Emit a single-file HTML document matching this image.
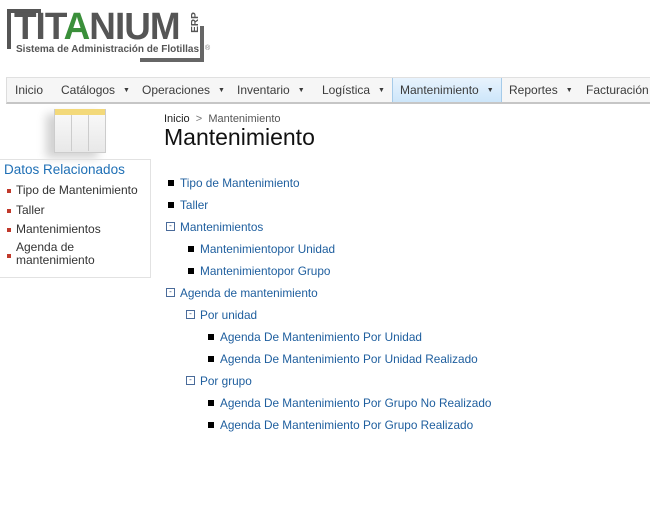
<!DOCTYPE html>
<html><head><meta charset="utf-8"><style>
body{margin:0;width:650px;height:520px;background:#fff;font-family:"Liberation Sans",sans-serif;position:relative;overflow:hidden;color:#333}
.a{position:absolute;white-space:nowrap}
.nav{position:absolute;left:6px;top:77px;width:644px;height:24px;background:#f6f6f6;border-top:1px solid #e0e0e0;border-left:1px solid #ddd;border-bottom:2px solid #c6c6c6}
.ni{position:absolute;top:5px;font-size:12px;color:#3b3b3b}
.tri{font-size:7px;vertical-align:2px;margin-left:8px}
.sel{position:absolute;left:385px;top:0;width:108px;height:24px;background:linear-gradient(#e8f3fd,#cde6fa);border-left:1px solid #a6cbe9;border-right:1px solid #a6cbe9}
.lk{color:#1e5e9e;font-size:11.8px}
.sq{position:absolute;width:6px;height:6px;background:#000}
.mn{position:absolute;width:7px;height:7px;border:1px solid #4a6b9a;font-size:8px;line-height:6px;text-align:center;color:#2a4a7a}
.side{position:absolute;left:0;top:159px;width:150px;height:117px;border:1px solid #e2e2e2;border-left:none}
.rb{position:absolute;left:7px;width:4px;height:4px;background:#c0392b}
</style></head><body>
<!-- logo -->
<div class="a" style="left:7px;top:9px;width:34px;height:4px;background:#555"></div>
<div class="a" style="left:7px;top:9px;width:4px;height:40px;background:#555"></div>
<div class="a" style="left:200px;top:26px;width:4px;height:36px;background:#666"></div>
<div class="a" style="left:140px;top:58px;width:64px;height:4px;background:#666"></div>
<div class="a" style="left:14px;top:6px;font:bold 38px 'Liberation Sans',sans-serif;color:#555;letter-spacing:-1px;transform:scaleX(0.97);transform-origin:left">TIT<span style="color:#3a8f3a">A</span>NIUM</div>
<div class="a" style="left:185px;top:17px;font:bold 10px 'Liberation Sans';color:#555;transform:rotate(-90deg)">ERP</div>
<div class="a" style="left:16px;top:44px;font:bold 10px 'Liberation Sans';color:#555">Sistema de Administración de Flotillas</div>
<div class="a" style="left:205px;top:45px;font-size:7px;color:#777">®</div>
<!-- nav -->
<div class="nav">
<div class="sel"></div>
<span class="ni" style="left:8px">Inicio</span>
<span class="ni" style="left:54px">Catálogos<span class="tri">▼</span></span>
<span class="ni" style="left:135px">Operaciones<span class="tri">▼</span></span>
<span class="ni" style="left:230px">Inventario<span class="tri">▼</span></span>
<span class="ni" style="left:315px">Logística<span class="tri">▼</span></span>
<span class="ni" style="left:393px">Mantenimiento<span class="tri">▼</span></span>
<span class="ni" style="left:502px">Reportes<span class="tri">▼</span></span>
<span class="ni" style="left:579px">Facturación</span>
</div>
<!-- icon -->
<div class="a" style="left:54px;top:109px;width:50px;height:42px;background:linear-gradient(#fafafa,#e8e8e8);border:1px solid #ccc;box-shadow:-8px 5px 9px rgba(0,0,0,.18)"></div>
<div class="a" style="left:55px;top:109px;width:50px;height:6px;background:#f3d97a"></div>
<div class="a" style="left:71px;top:115px;width:1px;height:36px;background:#ccc"></div>
<div class="a" style="left:88px;top:115px;width:1px;height:36px;background:#ccc"></div>
<!-- breadcrumb -->
<div class="a" style="left:164px;top:113px;font-size:11px;color:#222">Inicio <span style="color:#777">&nbsp;&gt;&nbsp;</span> <span style="color:#555">Mantenimiento</span></div>
<div class="a" style="left:164px;top:124px;font-size:23px;color:#111">Mantenimiento</div>
<!-- side -->
<div class="side"></div>
<div class="a" style="left:4px;top:162px;font-size:13.5px;color:#1e6fb5">Datos Relacionados</div>
<div class="rb" style="top:189px"></div><div class="a" style="left:16px;top:183px;font-size:12px">Tipo de Mantenimiento</div>
<div class="rb" style="top:209px"></div><div class="a" style="left:16px;top:203px;font-size:12px">Taller</div>
<div class="rb" style="top:228px"></div><div class="a" style="left:16px;top:222px;font-size:12px">Mantenimientos</div>
<div class="rb" style="top:254px"></div><div class="a" style="left:16px;top:241px;font-size:12px;line-height:13px">Agenda de<br>mantenimiento</div>
<!-- tree -->
<div class="sq" style="left:168px;top:180px"></div><div class="a lk" style="left:180px;top:176px">Tipo de Mantenimiento</div>
<div class="sq" style="left:168px;top:202px"></div><div class="a lk" style="left:180px;top:198px">Taller</div>
<div class="mn" style="left:166px;top:222px">-</div><div class="a lk" style="left:180px;top:220px">Mantenimientos</div>
<div class="sq" style="left:188px;top:246px"></div><div class="a lk" style="left:200px;top:242px">Mantenimientopor Unidad</div>
<div class="sq" style="left:188px;top:268px"></div><div class="a lk" style="left:200px;top:264px">Mantenimientopor Grupo</div>
<div class="mn" style="left:166px;top:288px">-</div><div class="a lk" style="left:180px;top:286px">Agenda de mantenimiento</div>
<div class="mn" style="left:186px;top:310px">-</div><div class="a lk" style="left:200px;top:308px">Por unidad</div>
<div class="sq" style="left:208px;top:334px"></div><div class="a lk" style="left:220px;top:330px">Agenda De Mantenimiento Por Unidad</div>
<div class="sq" style="left:208px;top:356px"></div><div class="a lk" style="left:220px;top:352px">Agenda De Mantenimiento Por Unidad Realizado</div>
<div class="mn" style="left:186px;top:376px">-</div><div class="a lk" style="left:200px;top:374px">Por grupo</div>
<div class="sq" style="left:208px;top:400px"></div><div class="a lk" style="left:220px;top:396px">Agenda De Mantenimiento Por Grupo No Realizado</div>
<div class="sq" style="left:208px;top:422px"></div><div class="a lk" style="left:220px;top:418px">Agenda De Mantenimiento Por Grupo Realizado</div>
</body></html>
